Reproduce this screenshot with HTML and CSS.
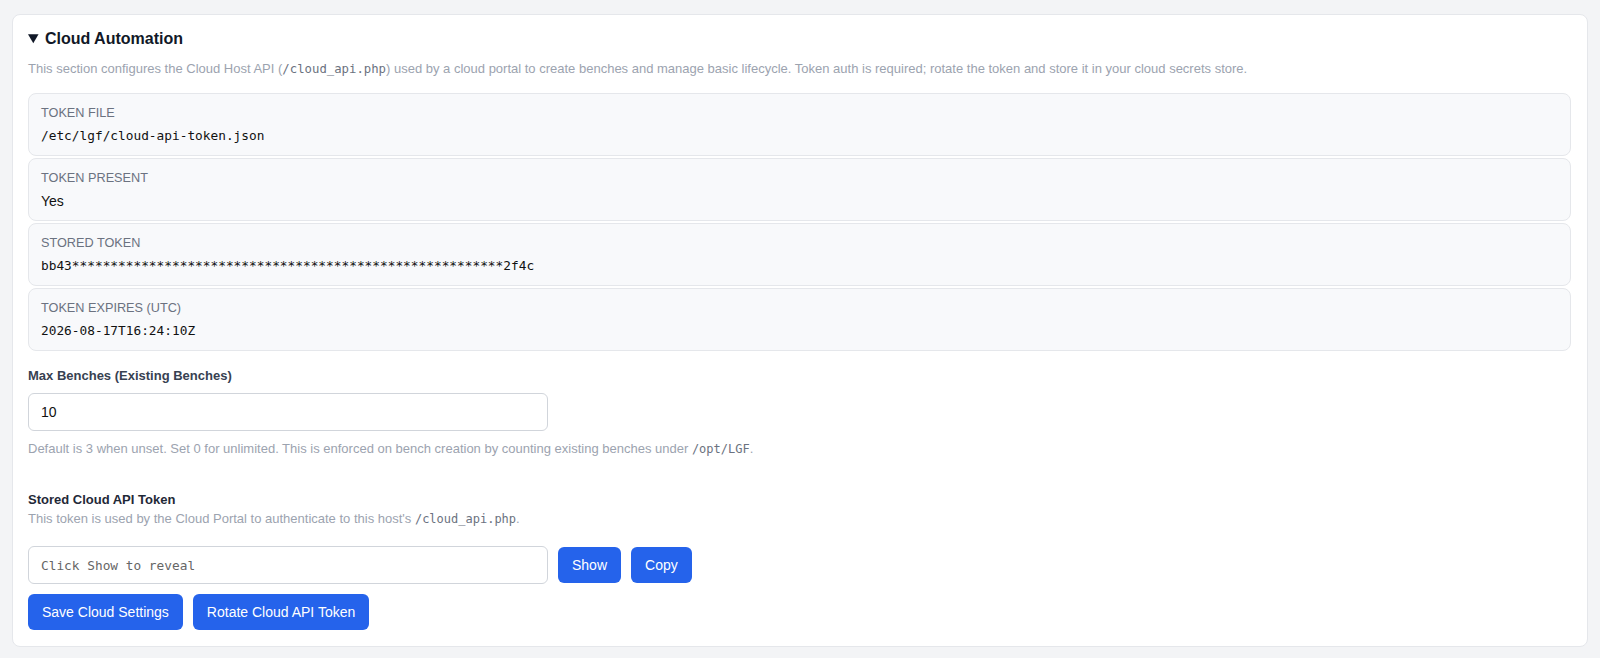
FILE: index.html
```html
<!DOCTYPE html>
<html lang="en">
<head>
<meta charset="utf-8">
<title>Cloud Automation</title>
<link rel="stylesheet" href="styles.css">
</head>
<body>

<details class="panel" open>
	<summary class="panel-title">Cloud Automation</summary>
	<p class="muted">This section configures the Cloud Host API (<code>/cloud_api.php</code>) used by a cloud portal to create benches and manage basic lifecycle. Token auth is required; rotate the token and store it in your cloud secrets store.</p>

	<!-- token status -->
	<div class="kv-list">
		<div class="kv">
			<div class="kv-label">Token File</div>
			<div class="kv-value mono">/etc/lgf/cloud-api-token.json</div>
		</div>
		<div class="kv">
			<div class="kv-label">Token Present</div>
			<div class="kv-value">Yes</div>
		</div>
		<div class="kv">
			<div class="kv-label">Stored Token</div>
			<div class="kv-value mono">bb43********************************************************2f4c</div>
		</div>
		<div class="kv">
			<div class="kv-label">Token Expires (UTC)</div>
			<div class="kv-value mono">2026-08-17T16:24:10Z</div>
		</div>
	</div>

	<form class="cloud-form" onsubmit="return false">
		<label class="field-label" for="max-benches">Max Benches (Existing Benches)</label>
		<input class="text-input" id="max-benches" type="text" value="10">
		<p class="help">Default is 3 when unset. Set 0 for unlimited. This is enforced on bench creation by counting existing benches under <code>/opt/LGF</code>.</p>

		<div class="token-block">
			<div class="field-label dark">Stored Cloud API Token</div>
			<p class="help tight">This token is used by the Cloud Portal to authenticate to this host's <code>/cloud_api.php</code>.</p>
		</div>

		<div class="row">
			<input class="text-input mono" type="text" placeholder="Click Show to reveal" readonly>
			<button class="btn" type="button">Show</button>
			<button class="btn" type="button">Copy</button>
		</div>
		<div class="row">
			<button class="btn" type="submit">Save Cloud Settings</button>
			<button class="btn" type="button">Rotate Cloud API Token</button>
		</div>
	</form>
</details>

</body>
</html>
```

FILE: styles.css
```css
html, body {
	margin: 0;
	background: #f3f4f6;
	font-family: "Liberation Sans", Arial, sans-serif;
	font-size: 14px;
	color: #111827;
}
body {
	padding: 14px 12px;
}

code, .mono {
	font-family: "DejaVu Sans Mono", "Liberation Mono", monospace;
}

.panel {
	background: #fff;
	border: 1px solid #e5e7eb;
	border-radius: 8px;
	padding: 15px 16px 16px 15px;
}

.panel-title {
	font-size: 16px;
	font-weight: bold;
	line-height: 18px;
	cursor: pointer;
}

.muted {
	margin: 12px 0 15px;
	color: #9ca3af;
	font-size: 13px;
	line-height: 18px;
}
.muted code {
	font-size: 12.3px;
	color: #6b7280;
}

/* key / value boxes */
.kv-list {
	display: flex;
	flex-direction: column;
	gap: 2px;
}
.kv {
	background: #f8f9fb;
	border: 1px solid #e5e7eb;
	border-radius: 8px;
	padding: 11px 12px 9px;
}
.kv-label {
	font-size: 12.7px;
	line-height: 16px;
	text-transform: uppercase;
	color: #6b7280;
}
.kv-value {
	margin-top: 5px;
	font-size: 14px;
	line-height: 20px;
	color: #111;
}
.kv-value.mono {
	font-size: 12.8px;
}

.cloud-form {
	margin-top: 16px;
}
.field-label {
	display: block;
	font-size: 13px;
	font-weight: bold;
	line-height: 18px;
	color: #374151;
}
.field-label.dark {
	color: #1f2937;
}

.text-input {
	box-sizing: border-box;
	display: block;
	width: 520px;
	height: 38px;
	margin-top: 8px;
	padding: 0 12px;
	border: 1px solid #d1d5db;
	border-radius: 6px;
	font-family: "Liberation Sans", Arial, sans-serif;
	font-size: 14px;
	color: #111;
	background: #fff;
}
.text-input.mono {
	margin-top: 0;
	font-family: "DejaVu Sans Mono", "Liberation Mono", monospace;
	font-size: 12.8px;
}
.text-input::placeholder {
	color: #666;
}

.help {
	margin: 9px 0 0;
	font-size: 13px;
	line-height: 18px;
	color: #9ca3af;
}
.help code {
	font-size: 12px;
	color: #6b7280;
}
.help.tight {
	margin-top: 1px;
}

.token-block {
	margin: 33px 0 18px;
}

.row {
	display: flex;
	align-items: center;
	gap: 10px;
	margin-top: 10px;
}
.row:first-of-type {
	margin-top: 0;
}

.btn {
	height: 36px;
	padding: 0 14px;
	border: 0;
	border-radius: 6px;
	background: #2563eb;
	color: #fff;
	font-family: "Liberation Sans", Arial, sans-serif;
	font-size: 14px;
	cursor: pointer;
}
```
